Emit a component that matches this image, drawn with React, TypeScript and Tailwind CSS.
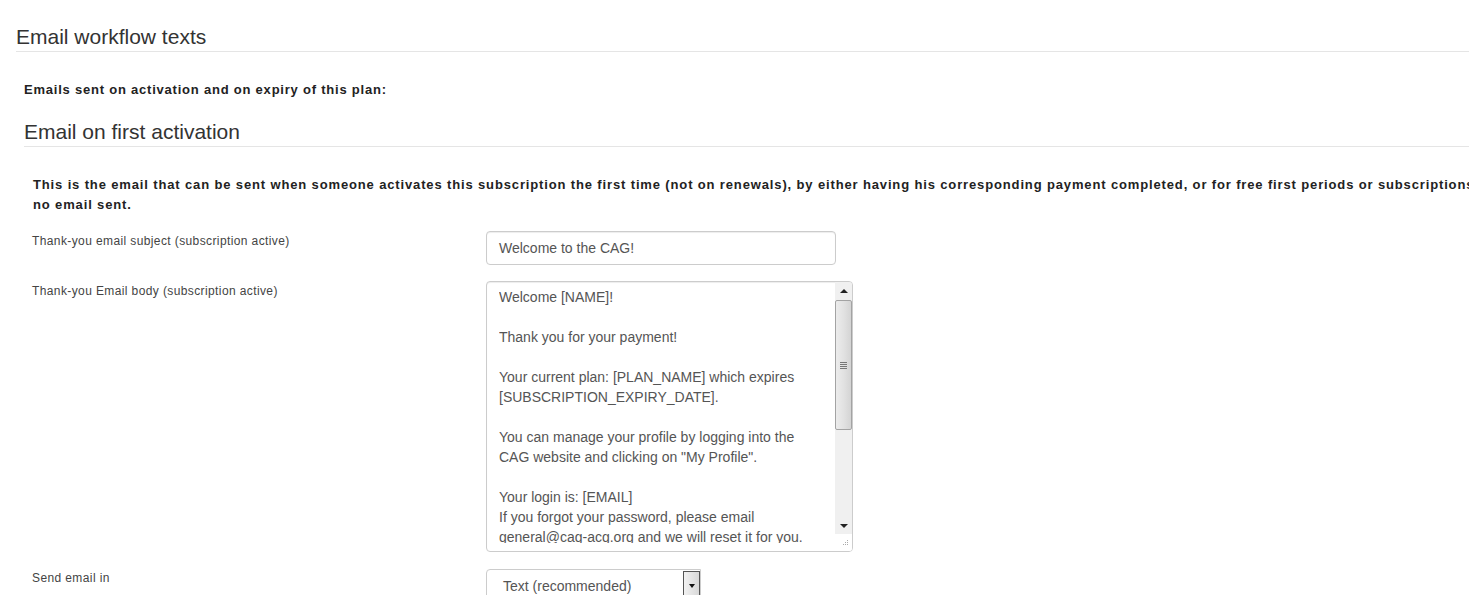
import React from 'react'

const bodyLines = [
  'Welcome [NAME]!',
  '',
  'Thank you for your payment!',
  '',
  'Your current plan: [PLAN_NAME] which expires',
  '[SUBSCRIPTION_EXPIRY_DATE].',
  '',
  'You can manage your profile by logging into the',
  'CAG website and clicking on "My Profile".',
  '',
  'Your login is: [EMAIL]',
  'If you forgot your password, please email',
  'general@cag-acg.org and we will reset it for you.',
  '',
  'Best regards,',
]

function Legend({ children, className }: { children: React.ReactNode; className?: string }) {
  return (
    <div
      className={`border-b border-[#e5e5e5] text-[21px] leading-[29px] text-[#333] ${className ?? ''}`}
    >
      {children}
    </div>
  )
}

function FakeScrollbar() {
  return (
    <div className="flex w-[17px] shrink-0 flex-col bg-[#f0f0f0]">
      <div className="flex h-[17px] items-center justify-center">
        <div className="h-0 w-0 border-x-[4px] border-b-[4px] border-x-transparent border-b-[#222]" />
      </div>
      <div className="flex-1 pt-px">
        <div className="flex h-[130px] items-center justify-center rounded-[2px] border border-[#a3a3a3] bg-gradient-to-r from-[#ececec] via-[#e2e2e2] to-[#d4d4d4]">
          <div className="flex flex-col gap-[1px]">
            <div className="h-px w-[7px] bg-[#777]" />
            <div className="h-px w-[7px] bg-[#777]" />
            <div className="h-px w-[7px] bg-[#777]" />
            <div className="h-px w-[7px] bg-[#777]" />
          </div>
        </div>
      </div>
      <div className="flex h-[17px] items-center justify-center">
        <div className="h-0 w-0 border-x-[4px] border-t-[4px] border-x-transparent border-t-[#222]" />
      </div>
      <div className="h-[17px] bg-white">
        <svg width="17" height="17" viewBox="0 0 17 17" aria-hidden="true">
          <g fill="#aaa">
            <rect x="12" y="6" width="1" height="1" />
            <rect x="10" y="8" width="1" height="1" />
            <rect x="12" y="8" width="1" height="1" />
            <rect x="8" y="10" width="1" height="1" />
            <rect x="10" y="10" width="1" height="1" />
            <rect x="12" y="10" width="1" height="1" />
          </g>
        </svg>
      </div>
    </div>
  )
}

function FieldRow({
  label,
  labelPad,
  children,
  className,
}: {
  label: string
  labelPad: string
  children: React.ReactNode
  className?: string
}) {
  return (
    <div className={`flex ${className ?? ''}`}>
      <div
        className={`w-[462px] shrink-0 pl-[8px] text-[12px] leading-4 tracking-[0.39px] text-[#444] ${labelPad}`}
      >
        {label}
      </div>
      <div>{children}</div>
    </div>
  )
}

export default function App() {
  return (
    <div
      className="h-[595px] w-full overflow-hidden bg-white text-[#333]"
      style={{ fontFamily: '"Liberation Sans", Arial, sans-serif' }}
    >
      <div className="pl-4">
        <Legend className="mt-[22px]">Email workflow texts</Legend>

        <div className="pl-2">
          <p className="mt-[28px] text-[13px] font-bold leading-5 tracking-[0.78px] text-[#222]">
            Emails sent on activation and on expiry of this plan:
          </p>

          <Legend className="mt-[17px]">Email on first activation</Legend>

          <p className="mt-[28px] whitespace-nowrap pl-[9px] text-[13px] font-bold leading-5 tracking-[0.86px] text-[#222]">
            This is the email that can be sent when someone activates this subscription the first time
            (not on renewals), by either having his corresponding payment completed, or for free first
            periods or subscriptions, when subscribing. Leave blank for
            <br />
            no email sent.
          </p>

          <FieldRow label="Thank-you email subject (subscription active)" labelPad="pt-[2px]" className="mt-4">
            <div className="flex h-[34px] w-[350px] items-center rounded-[4px] border border-[#ccc] px-3 text-[14px] text-[#555] shadow-[inset_0_1px_1px_rgba(0,0,0,0.075)]">
              Welcome to the CAG!
            </div>
          </FieldRow>

          <FieldRow label="Thank-you Email body (subscription active)" labelPad="pt-[2px]" className="mt-4">
            <div className="flex h-[271px] w-[367px] overflow-hidden rounded-[4px] border border-[#ccc] shadow-[inset_0_1px_1px_rgba(0,0,0,0.075)]">
              <div className="flex-1 pl-3 pt-[5px]">
                <div className="h-[256px] overflow-hidden text-[14px] leading-5 text-[#555]">
                  {bodyLines.map((line, i) => (
                    <div key={i} className="h-5 whitespace-pre">
                      {line}
                    </div>
                  ))}
                </div>
              </div>
              <FakeScrollbar />
            </div>
          </FieldRow>

          <FieldRow label="Send email in" labelPad="pt-px" className="mt-[17px]">
            <div className="flex h-[34px] w-[215px] rounded-l-[4px] border border-[#ccc] pt-px">
              <div className="flex-1 pl-4 pt-[5px] text-[14px] leading-5 text-[#555]">Text (recommended)</div>
              <div className="flex h-[32px] w-[17px] items-start justify-center border border-[#555] bg-gradient-to-r from-[#f2f2f2] to-[#d8d8d8] pt-[12px]">
                <div className="h-0 w-0 border-x-[3px] border-t-[4px] border-x-transparent border-t-[#111]" />
              </div>
            </div>
          </FieldRow>
        </div>
      </div>
    </div>
  )
}
